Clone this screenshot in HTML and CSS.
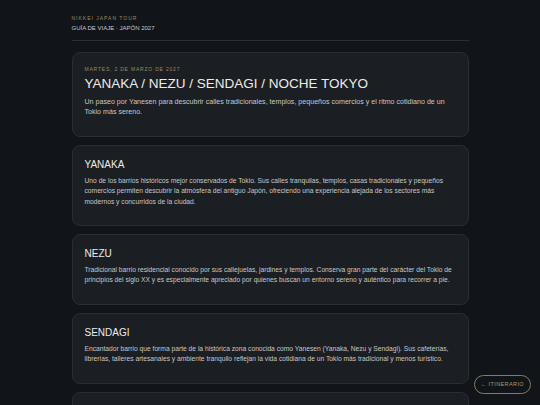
FILE: index.html
```html
<!DOCTYPE html>
<html lang="es">
<head>
  <meta charset="UTF-8">
  <meta name="viewport" content="width=device-width, initial-scale=1.0">
  <title>Yanaka / Nezu / Sendagi</title>
  <link rel="stylesheet" href="styles.css">
</head>
<body>
  <div class="page">
    <header class="top">
      <div class="brand">NIKKEI JAPAN TOUR</div>
      <div class="guide">GUÍA DE VIAJE · JAPÓN 2027</div>
    </header>

    <section class="card intro">
      <div class="date">MARTES, 2 DE MARZO DE 2027</div>
      <h1>YANAKA / NEZU / SENDAGI / NOCHE TOKYO</h1>
      <p>Un paseo por Yanesen para descubrir calles tradicionales, templos, pequeños comercios y el ritmo cotidiano de un Tokio más sereno.</p>
    </section>

    <section class="card">
      <h2>YANAKA</h2>
      <p>Uno de los barrios históricos mejor conservados de Tokio. Sus calles tranquilas, templos, casas tradicionales y pequeños comercios permiten descubrir la atmósfera del antiguo Japón, ofreciendo una experiencia alejada de los sectores más modernos y concurridos de la ciudad.</p>
    </section>

    <section class="card">
      <h2>NEZU</h2>
      <p>Tradicional barrio residencial conocido por sus callejuelas, jardines y templos. Conserva gran parte del carácter del Tokio de principios del siglo XX y es especialmente apreciado por quienes buscan un entorno sereno y auténtico para recorrer a pie.</p>
    </section>

    <section class="card">
      <h2>SENDAGI</h2>
      <p>Encantador barrio que forma parte de la histórica zona conocida como Yanesen (Yanaka, Nezu y Sendagi). Sus cafeterías, librerías, talleres artesanales y ambiente tranquilo reflejan la vida cotidiana de un Tokio más tradicional y menos turístico.</p>
    </section>

    <section class="card">
      <h2>NOCHE TOKYO</h2>
      <p>Cierre del día recorriendo las luces de la ciudad.</p>
    </section>
  </div>

  <a class="back" href="#">← ITINERARIO</a>
</body>
</html>
```

FILE: styles.css
```css
body {
  margin: 0;
  background: #111418;
  color: #d6d6d6;
  font-family: "Liberation Sans", Arial, sans-serif;
}
.page {
  width: 397px;
  margin: 0 auto;
  padding-top: 14px;
}
.top {
  padding-bottom: 8px;
  border-bottom: 1px solid #2a2e32;
  margin-bottom: 11px;
}
.brand {
  font-size: 5px;
  letter-spacing: 1px;
  color: #9c8a62;
  line-height: 8px;
}
.guide {
  font-size: 6px;
  color: #c9c9c9;
  line-height: 8px;
  margin-top: 2px;
}
.card {
  background: #1b1e22;
  border: 1px solid #2a2e33;
  border-radius: 8px;
  padding: 12px 8px 12px 12px;
  margin-bottom: 8px;
}
.date {
  font-size: 5px;
  letter-spacing: 0.8px;
  color: #9c8a62;
  line-height: 8px;
}
h1 {
  font-size: 13.5px;
  font-weight: normal;
  color: #ececec;
  margin: 2px 0 4px;
  line-height: 18px;
}
h2 {
  font-size: 10px;
  font-weight: normal;
  color: #ececec;
  margin: 0 0 4px;
  line-height: 14px;
}
p {
  font-size: 6.7px;
  line-height: 10.4px;
  color: #c8c8c8;
  margin: 0 0 6px;
}
.intro p {
  font-size: 7.1px;
}
.back {
  position: fixed;
  right: 9px;
  bottom: 11px;
  padding: 0 6px;
  height: 17px;
  line-height: 17px;
  border: 1px solid #8c7b58;
  border-radius: 10px;
  background: #111418;
  color: #ad9a6e;
  font-size: 5.5px;
  letter-spacing: 0.4px;
  text-decoration: none;
}
```
